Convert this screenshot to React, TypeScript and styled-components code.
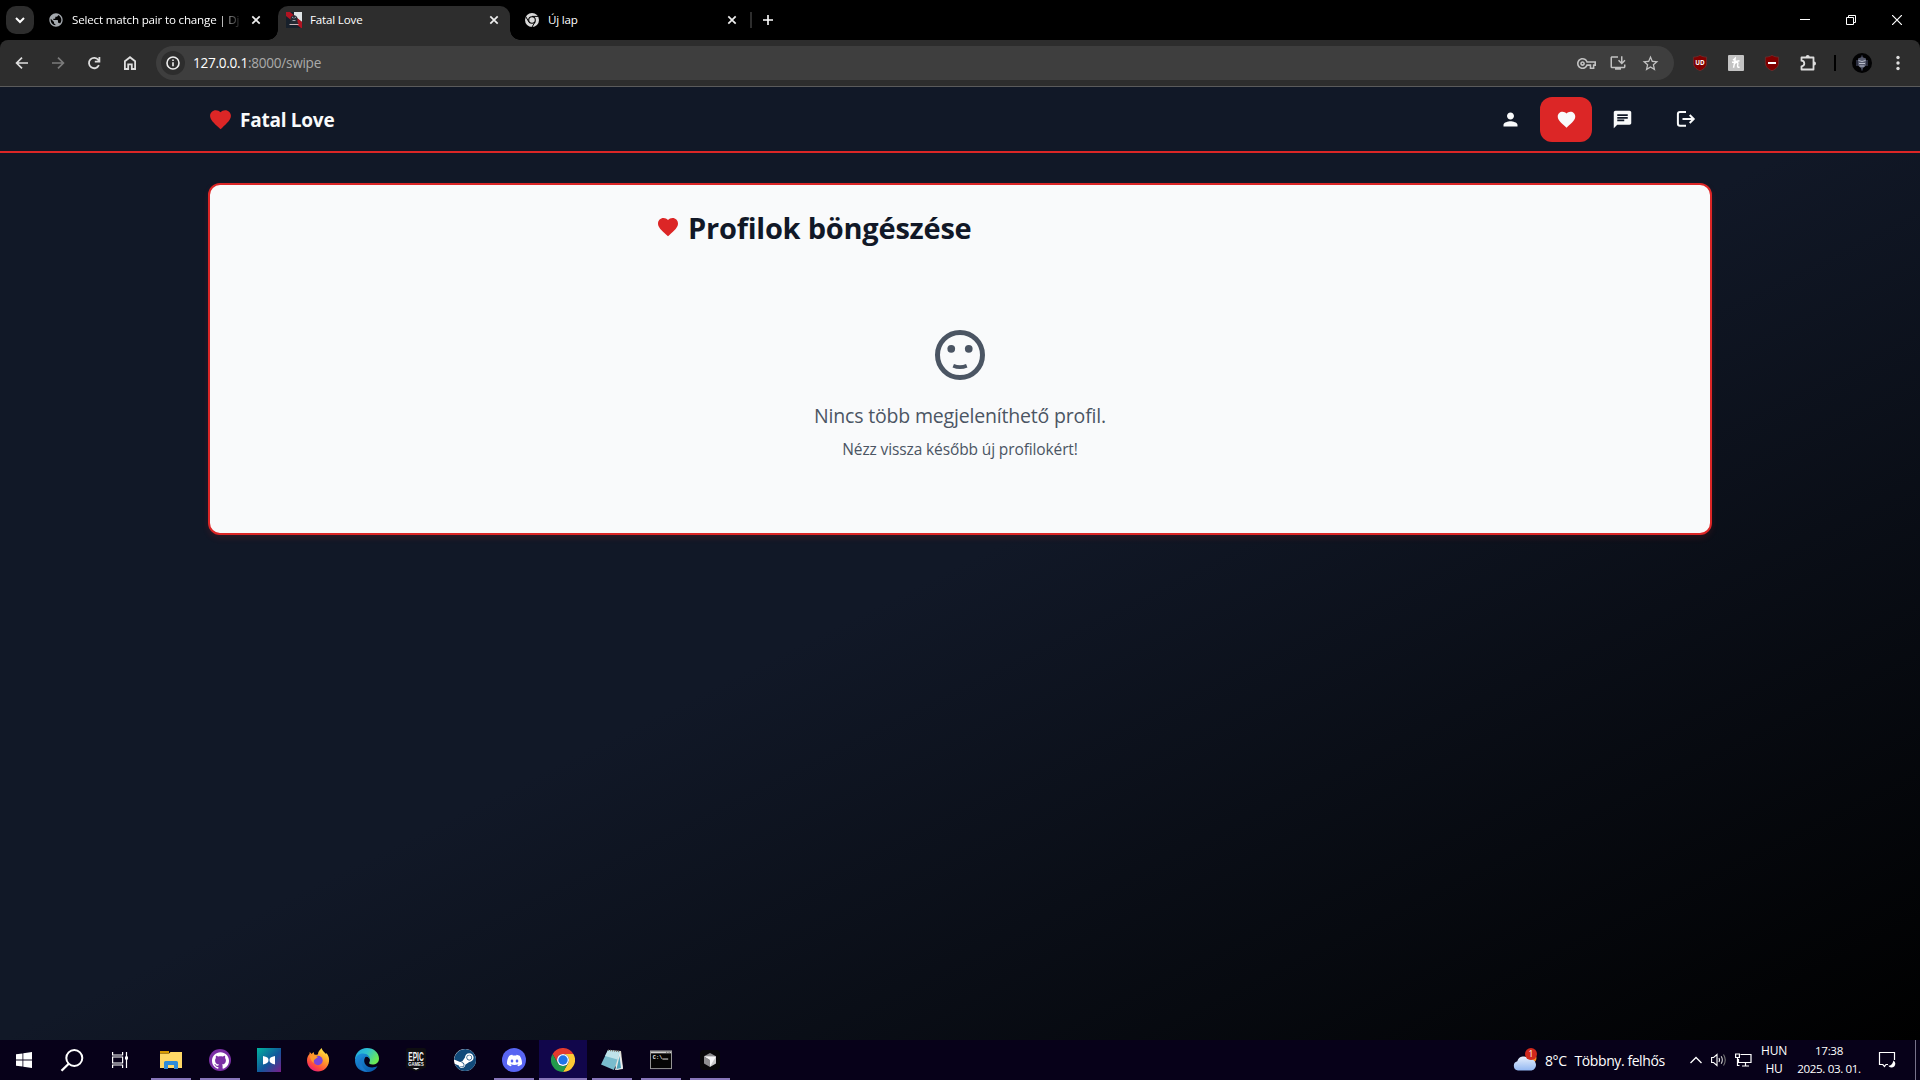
import React from 'react';
import styled, { createGlobalStyle, css } from 'styled-components';
import {
  MdFavorite,
  MdPerson,
  MdChat,
  MdOutlineVpnKey,
  MdInstallDesktop,
  MdStarBorder,
  MdPublic,
} from 'react-icons/md';
import { SiSteam, SiDiscord, SiGithub } from 'react-icons/si';

const font = '"Open Sans", "Noto Sans", sans-serif';
const red = '#dc2626';

const GlobalStyle = createGlobalStyle`
  * { box-sizing: border-box; }
  body { margin: 0; background: #000; font-family: ${font}; overflow: hidden; }
  svg { display: block; flex: none; }
  h1, p { margin: 0; }
`;

const Screen = styled.div`
  display: flex;
  flex-direction: column;
  width: 1920px;
  height: 1080px;
`;

/* ---------- Browser chrome ---------- */

const TabStrip = styled.div`
  display: flex;
  height: 40px;
  padding-left: 6px;
  background: #000;
  color: #fff;
`;

const TabSearch = styled.div`
  display: flex;
  align-items: center;
  justify-content: center;
  width: 28px;
  height: 28px;
  margin-top: 6px;
  border-radius: 10px;
  background: #2d2d2d;
`;

const Tab = styled.div<{ $width: number; $active?: boolean; $end?: number }>`
  position: relative;
  display: flex;
  align-items: center;
  gap: 9px;
  width: ${(p) => p.$width}px;
  height: 34px;
  margin-top: 6px;
  padding: 0 ${(p) => p.$end ?? 14}px 6px 15px;
  ${(p) =>
    p.$active &&
    css`
      gap: 8px;
      padding: 0 8px 6px;
      border-radius: 10px 10px 0 0;
      background: #2d2d2d;
      &::before,
      &::after {
        content: '';
        position: absolute;
        bottom: 0;
        width: 10px;
        height: 10px;
      }
      &::before {
        left: -10px;
        background: radial-gradient(circle at 0 0, transparent 9.5px, #2d2d2d 10px);
      }
      &::after {
        right: -10px;
        background: radial-gradient(circle at 100% 0, transparent 9.5px, #2d2d2d 10px);
      }
    `}
`;

const TabTitle = styled.span<{ $fade?: boolean }>`
  flex: 1;
  min-width: 0;
  font-size: 11.6px;
  line-height: 18px;
  letter-spacing: -0.18px;
  white-space: nowrap;
  ${(p) =>
    p.$fade &&
    css`
      mask-image: linear-gradient(to right, #000 148px, transparent 170px);
    `}
`;

const PageIcon = styled(MdPublic)`
  margin: -1px;
  color: #a3a8ad;
`;

const StripDivider = styled.div`
  width: 2px;
  height: 16px;
  margin: 12px 8px 0 4px;
  background: #2d2d2d;
`;

const NewTab = styled.div`
  display: flex;
  padding-top: 12px;
`;

const WindowControls = styled.div`
  display: flex;
  margin-left: auto;
`;

const WindowButton = styled.div`
  display: flex;
  align-items: center;
  justify-content: center;
  width: 46px;
  height: 40px;
`;

const ToolbarBackdrop = styled.div`
  background: #000;
`;

const Toolbar = styled.div`
  display: flex;
  align-items: center;
  height: 47px;
  padding: 0 4px;
  border-bottom: 1px solid #5b5b5b;
  border-radius: 8px 8px 0 0;
  background: #2d2d2d;
`;

const ToolButton = styled.div<{ $dim?: boolean }>`
  display: flex;
  align-items: center;
  justify-content: center;
  width: 36px;
  height: 34px;
  color: ${(p) => (p.$dim ? '#7b7b7b' : '#dedede')};
`;

const Omnibox = styled.div`
  display: flex;
  flex: 1;
  align-items: center;
  height: 34px;
  margin: 0 8px;
  padding: 0 8px 0 5px;
  border-radius: 17px;
  background: #3e3e3e;
  color: #c2c2c2;
`;

const SiteInfo = styled.div`
  display: flex;
  align-items: center;
  justify-content: center;
  width: 24px;
  height: 24px;
  margin-right: 8px;
  border-radius: 50%;
  background: #2d2d2d;
`;

const Url = styled.span`
  flex: 1;
  color: #aaa;
  font-size: 13.6px;
  line-height: 18px;
  letter-spacing: -0.27px;
`;

const Host = styled.span`
  color: #fff;
`;

const OmniAction = styled.div`
  display: flex;
  justify-content: center;
  width: 32px;
`;

const ToolDivider = styled.div`
  width: 2px;
  height: 16px;
  margin: 0 8px;
  background: #000;
`;

/* ---------- Page ---------- */

const Page = styled.div`
  flex: 1;
  background: linear-gradient(to bottom right, #111827 0%, #111827 50%, #000 100%);
`;

const Navbar = styled.header`
  display: flex;
  align-items: center;
  justify-content: space-between;
  height: 66px;
  padding: 0 208px;
  border-bottom: 2px solid ${red};
  background: #111827;
  color: #f9fafb;
`;

const Brand = styled.div`
  display: flex;
  align-items: center;
  gap: 7px;
`;

const BrandName = styled.span`
  padding-top: 2px;
  font-size: 19px;
  font-weight: 700;
  line-height: 28px;
  letter-spacing: -0.25px;
`;

const NavLinks = styled.nav`
  display: flex;
  gap: 4px;
`;

const NavLink = styled.a<{ $active?: boolean; $apart?: boolean }>`
  display: flex;
  align-items: center;
  justify-content: center;
  width: 52px;
  height: 45px;
  margin-left: ${(p) => (p.$apart ? 8 : 0)}px;
  border-radius: 12px;
  background: ${(p) => (p.$active ? red : 'transparent')};
`;

const Card = styled.main`
  height: 352px;
  margin: 30px 208px 0;
  padding-top: 24px;
  border: 2px solid ${red};
  border-radius: 12px;
  background: #f9fafb;
  box-shadow: 0 3px 6px rgba(220, 38, 38, 0.14);
`;

const CardHeader = styled.div`
  display: flex;
  align-items: center;
  gap: 8px;
  width: 608px;
  height: 36px;
  margin: 0 auto;
`;

const Title = styled.h1`
  padding-top: 2px;
  color: #111827;
  font-size: 29px;
  font-weight: 700;
  line-height: 36px;
  letter-spacing: -0.23px;
`;

const Empty = styled.div`
  display: flex;
  flex-direction: column;
  align-items: center;
  padding-top: 80px;
  color: #4b5563;
`;

const EmptyTitle = styled.p`
  margin-top: 17px;
  font-size: 19.5px;
  line-height: 28px;
  letter-spacing: -0.18px;
`;

const EmptyHint = styled.p`
  margin-top: 7px;
  font-size: 15.5px;
  line-height: 24px;
  letter-spacing: -0.12px;
`;

/* ---------- Taskbar ---------- */

const Taskbar = styled.footer`
  display: flex;
  height: 40px;
  background: #070119;
  color: #fff;
`;

const SystemItem = styled.div`
  display: flex;
  align-items: center;
  justify-content: center;
  width: 48px;
`;

const AppList = styled.div`
  display: flex;
  gap: 1px;
  margin-left: 3px;
`;

const AppItem = styled.div<{ $running?: boolean; $active?: boolean }>`
  display: flex;
  align-items: center;
  justify-content: center;
  width: 48px;
  background-repeat: no-repeat;
  background-position: bottom center;
  ${(p) =>
    p.$running &&
    css`
      background-image: linear-gradient(#8776ba, #8776ba);
      background-size: 40px 2px;
    `}
  ${(p) =>
    p.$active &&
    css`
      background-color: #11064b;
      background-size: 48px 2px;
    `}
`;

const Disc = styled.div<{ $bg: string; $size: number }>`
  display: flex;
  align-items: center;
  justify-content: center;
  width: ${(p) => p.$size}px;
  height: ${(p) => p.$size}px;
  border-radius: 50%;
  overflow: hidden;
  background: ${(p) => p.$bg};
`;

const Tray = styled.div`
  display: flex;
  align-items: center;
  margin-left: auto;
`;

const Weather = styled.div`
  display: flex;
  align-items: center;
  gap: 8px;
  width: 176px;
  font-size: 14px;
  letter-spacing: -0.42px;
  white-space: nowrap;
`;

const WeatherIcon = styled.div`
  position: relative;
  width: 24px;
  height: 24px;
`;

const WeatherBadge = styled.span`
  position: absolute;
  top: 0;
  right: 0;
  width: 12px;
  height: 12px;
  border-radius: 50%;
  background: #d0281c;
  font-size: 8.5px;
  line-height: 12px;
  letter-spacing: 0;
  text-align: center;
`;

const TrayIcons = styled.div`
  display: flex;
  align-items: center;
  gap: 8px;
  width: 68px;
`;

const Stack = styled.div<{ $width: number; $spacing: number; $size: number }>`
  width: ${(p) => p.$width}px;
  font-size: ${(p) => p.$size}px;
  line-height: 18px;
  letter-spacing: ${(p) => p.$spacing}px;
  text-align: center;
  white-space: nowrap;
`;

const Notifications = styled.div`
  display: flex;
  justify-content: center;
  width: 40px;
  margin-right: 8px;
`;

const ShowDesktop = styled.div`
  width: 5px;
  height: 40px;
  border-left: 1px solid #77728a;
`;

/* ---------- Drawings ---------- */

const Close = () => (
  <svg width="16" height="16" viewBox="0 0 16 16" stroke="#eee" strokeWidth="1.7">
    <path d="M4.3 4.3l7.4 7.4M11.7 4.3l-7.4 7.4" />
  </svg>
);

const Arrow = ({ flip }: { flip?: boolean }) => (
  <svg width="16" height="16" viewBox="0 0 16 16" fill="none" stroke="currentColor" strokeWidth="1.7">
    <path d={flip ? 'M2 8h11M8 2.600L13.400 8 8 13.400' : 'M14 8H3M8 2.600L2.600 8 8 13.400'} />
  </svg>
);

const Reload = () => (
  <svg width="16" height="16" viewBox="0 0 16 16" fill="none" stroke="currentColor" strokeWidth="1.8">
    <path d="M12.9 10.2A5.2 5.2 0 1 1 12.4 5L13.5 6.4M13.4 2v4.6H8.8" />
  </svg>
);

const Home = () => (
  <svg width="16" height="16" viewBox="0 0 16 16" fill="none" stroke="currentColor" strokeWidth="1.8">
    <path d="M2.9 14V6.2L8 2.2l5.1 4V14H9.8V9.4H6.2V14z" />
  </svg>
);

const Info = () => (
  <svg width="14" height="14" viewBox="0 0 14 14" fill="none" stroke="#eee" strokeWidth="1.6">
    <circle cx="7" cy="7" r="6" />
    <path d="M7 6.2v4M7 3.4V5" />
  </svg>
);

const FatalFavicon = () => (
  <svg width="16" height="16" viewBox="0 0 16 16">
    <rect width="16" height="16" fill="#17202b" />
    <path d="M8 0h8v10L8 4z" fill="#dfe3e5" />
    <path d="M0 0h4l12 10v6h-1L0 4z" fill="#b01422" />
    <path d="M4.500 7c0-5 7-5 7 0v3l1 2h-9l1-2z" fill="#242a33" />
    <path d="M6 5l1.500 1M10 5L8.500 6M6.500 8.500h3" stroke="#9ca3ad" />
    <path d="M3.500 12.500h9" stroke="#cbb6ba" />
  </svg>
);

const ChromeMono = () => (
  <svg width="14" height="14" viewBox="0 0 24 24">
    <circle cx="12" cy="12" r="12" fill="#d9d9d9" />
    <circle cx="12" cy="12" r="6.6" fill="#000" />
    <path d="M12 5.8h11M6.5 15.2L1.2 6M17.4 15.2L12 24" stroke="#000" strokeWidth="1.7" />
    <circle cx="12" cy="12" r="4.7" fill="#d9d9d9" />
  </svg>
);

const Shield = ({ label }: { label?: string }) => (
  <svg width="16" height="16" viewBox="0 0 16 16">
    <path
      d="M8 .3c2 1.300 4 1.700 6.600 1.800v5.500c0 4-2.300 6.400-6.600 8.100-4.300-1.700-6.600-4.100-6.600-8.100V2.100C4 2 6 1.600 8 .3z"
      fill="#800000"
      stroke="#6b3030"
      strokeWidth=".8"
    />
    {label ? (
      <text x="8" y="10" textAnchor="middle" fill="#fff" fontFamily="Open Sans" fontWeight="700" fontSize="6.300">
        {label}
      </text>
    ) : (
      <path d="M4 8h8" stroke="#fff" strokeWidth="2" />
    )}
  </svg>
);

const Honey = () => (
  <svg width="16" height="16" viewBox="0 0 16 16" fill="none">
    <rect width="16" height="16" rx="1" fill="#c3c3c3" />
    <path
      d="M5.500 12.700C6.500 9 7 6 7.200 3.200L5 5.300M5.800 9.500C8 6.500 10.500 6.500 9.800 9.300c-.6 2.200-.2 3.800 1.700 2.500M4 7.300l7.500-1.600"
      stroke="#fff"
      strokeWidth="1.400"
    />
  </svg>
);

const Puzzle = () => (
  <svg width="18" height="18" viewBox="0 0 18 18" fill="none" stroke="currentColor" strokeWidth="1.800">
    <path d="M2.500 3.500h12v12h-12v-3.200q2.800-.3 2.800-2.800T2.500 6.700z" strokeLinejoin="round" />
    <path d="M6.700 3a2 2 0 0 1 4 0zM15 7.500a2 2 0 0 1 0 4z" fill="currentColor" stroke="none" />
  </svg>
);

const Kebab = () => (
  <svg width="4" height="16" fill="currentColor">
    <circle cx="2" cy="2.500" r="1.700" />
    <circle cx="2" cy="8" r="1.700" />
    <circle cx="2" cy="13.500" r="1.700" />
  </svg>
);

const Avatar = () => (
  <svg width="20" height="20" viewBox="0 0 20 20">
    <circle cx="10" cy="10" r="10" fill="#020203" />
    <path d="M10 2.500v15M5 7v6M15 7v6" stroke="#3d4158" strokeWidth="1.400" />
    <path d="M6 5.500l4-1.500 4 1.500v7L10 16l-4-3.500z" fill="#55596c" />
    <path d="M6.500 7.500l3.500 1 3.500-1M7 10.500h6M7.500 13h5" stroke="#b9bdcb" fill="none" />
  </svg>
);

const Logout = () => (
  <svg width="20" height="20" viewBox="0 0 20 20" fill="none" stroke="currentColor" strokeWidth="2">
    <path d="M10 3H4Q1.900 3 1.900 5v9.500q0 2.200 2.100 2.200h6M6.500 10h11M13.700 6l4 4-4 4" />
  </svg>
);

const Face = () => (
  <svg width="60" height="60" viewBox="0 0 24 24" fill="none" stroke="currentColor">
    <circle cx="12" cy="12" r="9" strokeWidth="2" />
    <circle cx="8.500" cy="9.500" r="1.550" fill="currentColor" stroke="none" />
    <circle cx="15.500" cy="9.500" r="1.550" fill="currentColor" stroke="none" />
    <path d="M9.300 16.300q2.700 1.100 5.400 0" strokeWidth="1.500" />
  </svg>
);

const Windows = () => (
  <svg width="16" height="16" viewBox="0 0 16 16" fill="#fff">
    <path d="M0 2.300L6.500 1.400V7.600H0zM7.300 1.300L16 0v7.600H7.300zM0 8.400h6.500v6.200L0 13.700zM7.300 8.400H16V16l-8.700-1.300z" />
  </svg>
);

const Search = () => (
  <svg width="24" height="24" viewBox="0 0 24 24" fill="none" stroke="#fff" strokeWidth="2">
    <circle cx="14.300" cy="10" r="8" />
    <path d="M8.700 15.700L1.500 22.800" strokeWidth="2.300" />
  </svg>
);

const TaskView = () => (
  <svg width="16" height="16" viewBox="0 0 16 16" fill="none" stroke="#fff" strokeWidth="1.200">
    <path d="M.6 0v3h10V0M.6 5h10v6H.6zM.6 16v-3h10v3M14.500 0v16" />
    <rect x="13" y="4.500" width="3" height="3" fill="#fff" stroke="none" />
  </svg>
);

const Explorer = () => (
  <svg width="22" height="18" viewBox="0 0 22 18">
    <path d="M0 2.500h9L10.500 1H22v16H0z" fill="#ffd866" />
    <path d="M0 0h9v2.500H0z" fill="#d89a00" />
    <path d="M4 18v-6.500Q4 10 5.500 10h11Q18 10 18 11.500V18h-4v-4H8v4z" fill="#2f8bd8" />
  </svg>
);

const Bowtie = () => (
  <svg width="24" height="24" viewBox="0 0 24 24">
    <defs>
      <linearGradient id="bow" x1="0" y1="0" x2="1" y2="1">
        <stop offset="0" stopColor="#00b39f" />
        <stop offset=".55" stopColor="#12569b" />
        <stop offset="1" stopColor="#7c1d8a" />
      </linearGradient>
    </defs>
    <rect width="24" height="24" fill="url(#bow)" />
    <path d="M6 8q6 1 5.500 4Q12 15 6 16.500zM18 8q-6 1-5.500 4Q12 15 18 16.500z" fill="#fff" />
  </svg>
);

const Firefox = () => (
  <svg width="24" height="24" viewBox="0 0 24 24">
    <defs>
      <linearGradient id="fox" x1=".8" y1="0" x2=".2" y2="1">
        <stop offset="0" stopColor="#fff14a" />
        <stop offset=".4" stopColor="#ffa02a" />
        <stop offset=".75" stopColor="#ff4a3d" />
        <stop offset="1" stopColor="#e31587" />
      </linearGradient>
    </defs>
    <path
      d="M15.500 0c1 3 3 4 4.500 6l.5-1c2 3 3 5 2.500 8.500C22.300 19.500 17.500 23.500 12 23.500S1 19 1 12.500C1 9.500 2 7.500 3.500 6l.2-2 2 2 1.800-2 .8 2.500c2 .5 3 .5 3.700-.5C12 3.500 14 2 15.500 0z"
      fill="url(#fox)"
    />
    <circle cx="12" cy="12.500" r="4.700" fill="#7d45d8" />
    <path d="M4 8c3-1.500 5.500 0 8 1l-3 2.300c-1.500 1-1.700 2.200-.5 3.700-2.500-.5-4-3-4.500-7z" fill="#ff9a2b" />
  </svg>
);

const Edge = () => (
  <svg width="24" height="24" viewBox="0 0 24 24">
    <defs>
      <linearGradient id="edgeTop" x1="0" y1="0" x2="1" y2=".5">
        <stop offset="0" stopColor="#1ea7e0" />
        <stop offset=".5" stopColor="#2fc0d0" />
        <stop offset="1" stopColor="#6bea55" />
      </linearGradient>
      <linearGradient id="edgeBody" x1="0" y1="0" x2=".7" y2="1">
        <stop offset="0" stopColor="#1c94de" />
        <stop offset="1" stopColor="#0b5cab" />
      </linearGradient>
    </defs>
    <path d="M0 12C0 5 5 0 12 0s12 5 12 10.500c0 4-3 6-6.500 6-3 0-4-1-3-2.500 1.500-3-.5-5.500-4-5.500C5 8.500 1 10 0 12z" fill="url(#edgeTop)" />
    <path d="M0 12.500C.5 8 4 5.500 8 5.500c4.500 0 7 3 7 6-.5-1.500-2-3-4-3-2 2-2.500 5-.5 8 2 3 7.500 4 12 1.500C20.500 22 16.500 24 12 24 5 24 0 19 0 12.500z" fill="url(#edgeBody)" />
    <path d="M11 8.500c-5 1.500-5.500 8-2 12 1 1.300 2 2.300 3.500 3.400C6 23.500 3.500 19 4 15c.5-4 3.500-6.500 7-6.500z" fill="#1a78ca" />
  </svg>
);

const Epic = () => (
  <svg width="20" height="24" viewBox="0 0 20 24">
    <path d="M2 0h16q2 0 2 2v17.500L10 23.500 0 19.500V2q0-2 2-2z" fill="#0e0e11" />
    <text x="2.300" y="12.600" textLength="15.400" lengthAdjust="spacingAndGlyphs" fill="#f2f2f2" fontFamily="Liberation Sans" fontWeight="700" fontSize="13">
      EPIC
    </text>
    <text x="2.300" y="17.600" textLength="15.400" lengthAdjust="spacingAndGlyphs" fill="#f2f2f2" fontFamily="Liberation Sans" fontWeight="700" fontSize="5">
      GAMES
    </text>
    <path d="M6.500 20h7L10 21.700z" fill="#f2f2f2" />
  </svg>
);

const ChromeColor = () => (
  <svg width="24" height="24" viewBox="0 0 24 24">
    <path d="M1.600 6A12 12 0 0 1 22.400 6H12a6 6 0 0 0-5.200 9z" fill="#e33b2e" />
    <path d="M22.400 6A12 12 0 0 1 12 24l5.200-9A6 6 0 0 0 12 6z" fill="#fcc934" />
    <path d="M12 24A12 12 0 0 1 1.600 6l5.200 9a6 6 0 0 0 10.400 0z" fill="#239a4b" />
    <circle cx="12" cy="12" r="6" fill="#fff" />
    <circle cx="12" cy="12" r="4.700" fill="#1f74e8" />
  </svg>
);

const Notepad = () => (
  <svg width="24" height="24" viewBox="0 0 24 24">
    <path d="M8 2l13 1 2 17-6 2z" fill="#d7d3c4" />
    <path d="M8 2l12 1.500L14 22 1 16.500z" fill="#79bccd" />
    <path d="M8 2l12 1.500-2.500 8L5 8z" fill="#bfe3ea" />
    <path d="M20 3.500L23 21l-8 1z" fill="#e9eef0" />
    <path d="M19.500 8L21 20l-4.500 1z" fill="#4fa3b8" />
    <path d="M8 2.200l12 1.300" stroke="#776f63" strokeWidth="1.500" strokeDasharray="1 1" />
  </svg>
);

const Terminal = () => (
  <svg width="22" height="20" viewBox="0 0 23 20">
    <rect x=".5" y=".5" width="22" height="18.500" fill="#050505" stroke="#9b9b9b" />
    <path d="M1 1h21v2H1z" fill="#d0d0d0" />
    <path d="M17 2h1M19.500 2h1" stroke="#444" />
    <text x="3" y="9.300" fill="#eee" fontFamily="Liberation Mono" fontWeight="700" fontSize="5.500">
      C:\
    </text>
    <path d="M13 9h6" stroke="#eee" />
  </svg>
);

const Cursor = () => (
  <svg width="20" height="20" viewBox="0 0 20 20">
    <rect width="20" height="20" rx="4" fill="#080808" />
    <path d="M10 3l6 3.300-6 3.700-6-3.700z" fill="#8a8a8a" />
    <path d="M4 6.300L10 10v7l-6-3.500z" fill="#8f8f8f" />
    <path d="M16 6.300v7.200L10 17v-7z" fill="#c9c9c9" />
    <path d="M4 6.300l12 .2L10 16.500V10z" fill="#f6f6f6" />
  </svg>
);

const Cloud = () => (
  <svg width="24" height="24" viewBox="0 0 24 24">
    <defs>
      <linearGradient id="cloud" x1="0" y1="0" x2="0" y2="1">
        <stop offset="0" stopColor="#e8f0fc" />
        <stop offset="1" stopColor="#93b8f2" />
      </linearGradient>
    </defs>
    <circle cx="18" cy="10" r="5.500" fill="#f5891f" />
    <path d="M5 22.500a4.700 4.700 0 0 1-.7-9.200A6.500 6.500 0 0 1 16 11.300a5.700 5.700 0 0 1 2.500 11.200z" fill="url(#cloud)" />
  </svg>
);

const Chevron = () => (
  <svg width="14" height="10" viewBox="0 0 14 10" fill="none" stroke="#fff" strokeWidth="1.300">
    <path d="M1.500 8L7 2.500 12.500 8" />
  </svg>
);

const Speaker = () => (
  <svg width="16" height="14" viewBox="0 0 16 14" fill="none" stroke="#fff" strokeWidth="1.100">
    <path d="M.6 4.500h2L6 1.500v11L2.600 9.500h-2z" />
    <path d="M8 5q1 2 0 4" />
    <path d="M10.200 3.300q2.300 3.700 0 7.400" stroke="#ccc" />
    <path d="M12.500 1.500q3.500 5.500 0 11" stroke="#777" />
  </svg>
);

const Network = () => (
  <svg width="17" height="14" viewBox="0 0 17 14" fill="none" stroke="#fff" strokeWidth="1.200">
    <path d="M5.500 1.500h10.500v8H3.500V6M7 13h7M10.500 9.500V13M.6 1h3.800v3.500H.6zM2.500 4.500v8h2" />
  </svg>
);

const Bubble = () => (
  <svg width="18" height="18" viewBox="0 0 18 18" fill="none" stroke="#fff" strokeWidth="1.200">
    <path d="M10 13.500H8L6.500 15.500 4.800 13.500H1.500V1.500h15V9" />
    <path d="M15.500 9.500a3.800 3.800 0 1 1-5.200 5.300q3.700.1 5.200-5.300z" fill="#fff" stroke="none" />
  </svg>
);

const Chrome = () => (
  <>
    <TabStrip>
      <TabSearch>
        <svg width="10" height="8" viewBox="0 0 10 8" fill="none" stroke="#fff" strokeWidth="2">
          <path d="M1 2l4 4 4-4" />
        </svg>
      </TabSearch>
      <Tab $width={244}>
        <PageIcon size={16} />
        <TabTitle $fade>Select match pair to change | Dj</TabTitle>
        <Close />
      </Tab>
      <Tab $width={232} $active>
        <FatalFavicon />
        <TabTitle>Fatal Love</TabTitle>
        <Close />
      </Tab>
      <Tab $width={236} $end={6}>
        <ChromeMono />
        <TabTitle>Új lap</TabTitle>
        <Close />
      </Tab>
      <StripDivider />
      <NewTab>
        <svg width="16" height="16" viewBox="0 0 16 16" stroke="#fff" strokeWidth="1.6">
          <path d="M8 3v10M3 8h10" />
        </svg>
      </NewTab>
      <WindowControls>
        <WindowButton>
          <svg width="10" height="10" stroke="#fff">
            <path d="M0 4.500h10" />
          </svg>
        </WindowButton>
        <WindowButton>
          <svg width="10" height="10" fill="none" stroke="#fff">
            <path d="M.5 2.500h7v7h-7zM2.500 2.500v-2h7v7h-2" />
          </svg>
        </WindowButton>
        <WindowButton>
          <svg width="10" height="10" stroke="#fff" strokeWidth="1.200">
            <path d="M0 0l10 10M10 0L0 10" />
          </svg>
        </WindowButton>
      </WindowControls>
    </TabStrip>
    <ToolbarBackdrop>
      <Toolbar>
        <ToolButton><Arrow /></ToolButton>
        <ToolButton $dim><Arrow flip /></ToolButton>
        <ToolButton><Reload /></ToolButton>
        <ToolButton><Home /></ToolButton>
        <Omnibox>
          <SiteInfo><Info /></SiteInfo>
          <Url><Host>127.0.0.1</Host>:8000/swipe</Url>
          <OmniAction><MdOutlineVpnKey size={19} /></OmniAction>
          <OmniAction><MdInstallDesktop size={18} /></OmniAction>
          <OmniAction><MdStarBorder size={19} /></OmniAction>
        </Omnibox>
        <ToolButton><Shield label="UD" /></ToolButton>
        <ToolButton><Honey /></ToolButton>
        <ToolButton><Shield /></ToolButton>
        <ToolButton><Puzzle /></ToolButton>
        <ToolDivider />
        <ToolButton><Avatar /></ToolButton>
        <ToolButton><Kebab /></ToolButton>
      </Toolbar>
    </ToolbarBackdrop>
  </>
);

export default function App() {
  return (
    <Screen>
      <GlobalStyle />
      <Chrome />

      <Page>
        <Navbar>
          <Brand>
            <MdFavorite size={25} color={red} />
            <BrandName>Fatal Love</BrandName>
          </Brand>
          <NavLinks>
            <NavLink><MdPerson size={21} /></NavLink>
            <NavLink $active><MdFavorite size={21} /></NavLink>
            <NavLink><MdChat size={21} /></NavLink>
            <NavLink $apart><Logout /></NavLink>
          </NavLinks>
        </Navbar>
        <Card>
          <CardHeader>
            <MdFavorite size={24} color={red} />
            <Title>Profilok böngészése</Title>
          </CardHeader>
          <Empty>
            <Face />
            <EmptyTitle>Nincs több megjeleníthető profil.</EmptyTitle>
            <EmptyHint>Nézz vissza később új profilokért!</EmptyHint>
          </Empty>
        </Card>
      </Page>

      <Taskbar>
        <SystemItem><Windows /></SystemItem>
        <SystemItem><Search /></SystemItem>
        <SystemItem><TaskView /></SystemItem>
        <AppList>
          <AppItem $running><Explorer /></AppItem>
          <AppItem $running>
            <Disc $bg="#7b2fa5" $size={22}><SiGithub size={17} color="#fff" /></Disc>
          </AppItem>
          <AppItem><Bowtie /></AppItem>
          <AppItem><Firefox /></AppItem>
          <AppItem><Edge /></AppItem>
          <AppItem><Epic /></AppItem>
          <AppItem>
            <Disc $bg="#fff" $size={22}><SiSteam size={23} color="#114a7a" /></Disc>
          </AppItem>
          <AppItem $running>
            <Disc $bg="#5865f2" $size={24}><SiDiscord size={15} color="#fff" /></Disc>
          </AppItem>
          <AppItem $running $active><ChromeColor /></AppItem>
          <AppItem $running><Notepad /></AppItem>
          <AppItem $running><Terminal /></AppItem>
          <AppItem $running><Cursor /></AppItem>
        </AppList>

        <Tray>
          <Weather>
            <WeatherIcon>
              <Cloud />
              <WeatherBadge>1</WeatherBadge>
            </WeatherIcon>
            <span>8°C</span>
            <span>Többny. felhős</span>
          </Weather>
          <TrayIcons>
            <Chevron />
            <Speaker />
            <Network />
          </TrayIcons>
          <Stack $width={34} $spacing={-0.2} $size={12}>
            HUN
            <br />
            HU
          </Stack>
          <Stack $width={76} $spacing={-0.35} $size={11.6}>
            17:38
            <br />
            2025. 03. 01.
          </Stack>
          <Notifications><Bubble /></Notifications>
          <ShowDesktop />
        </Tray>
      </Taskbar>
    </Screen>
  );
}
